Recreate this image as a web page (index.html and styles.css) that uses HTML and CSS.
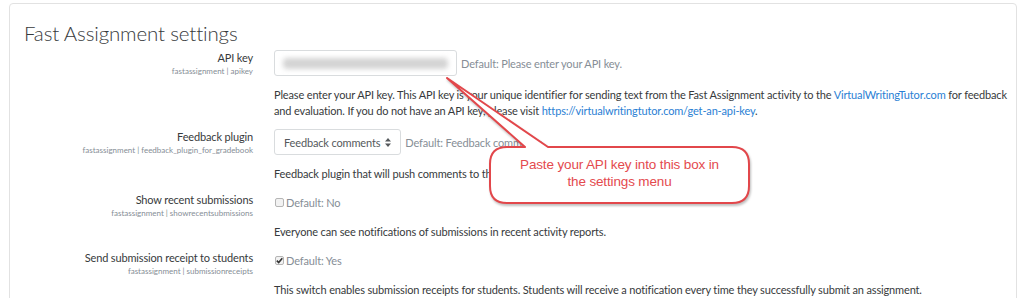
FILE: index.html
```html
<!DOCTYPE html>
<html>
<head>
    <title>Fast Assignment settings</title>
    <link rel="stylesheet" href="styles.css">
</head>
<body>
    <div class="card">
        <h2 class="title">Fast Assignment settings</h2>

        <div class="setting">
            <div class="label">
                <div class="name">API key</div>
                <div class="key">fastassignment | apikey</div>
            </div>
            <div class="field">
                <div class="control">
                    <div class="text-input"><span class="blurred"></span></div>
                    <span class="default">Default: Please enter your API key.</span>
                </div>
                <div class="desc">
                    Please enter your API key. This API key is your unique identifier for sending text from the Fast Assignment activity to the <a href="#">VirtualWritingTutor.com</a> for feedback and evaluation. If you do not have an API key, please visit <a href="#">https://virtualwritingtutor.com/get-an-api-key</a>.
                </div>
            </div>
        </div>

        <div class="setting">
            <div class="label">
                <div class="name">Feedback plugin</div>
                <div class="key">fastassignment | feedback_plugin_for_gradebook</div>
            </div>
            <div class="field">
                <div class="control">
                    <div class="select">
                        Feedback comments
                        <svg class="arrows" width="6" height="9" viewBox="0 0 6 9"><path d="M3 0 L6 3.5 L0 3.5 Z M0 5.5 L6 5.5 L3 9 Z" fill="#55595c"/></svg>
                    </div>
                    <span class="default">Default: Feedback comments</span>
                </div>
                <div class="desc">Feedback plugin that will push comments to the gradebook.</div>
            </div>
        </div>

        <div class="setting">
            <div class="label">
                <div class="name">Show recent submissions</div>
                <div class="key">fastassignment | showrecentsubmissions</div>
            </div>
            <div class="field">
                <div class="control check-line">
                    <span class="checkbox"></span>
                    <span class="default">Default: No</span>
                </div>
                <div class="desc">Everyone can see notifications of submissions in recent activity reports.</div>
            </div>
        </div>

        <div class="setting">
            <div class="label">
                <div class="name">Send submission receipt to students</div>
                <div class="key">fastassignment | submissionreceipts</div>
            </div>
            <div class="field">
                <div class="control check-line">
                    <span class="checkbox">
                        <svg width="9" height="9" viewBox="0 0 9 9"><path d="M1.8 4.6 L3.7 6.6 L7.3 2.2" fill="none" stroke="#333" stroke-width="1.6"/></svg>
                    </span>
                    <span class="default">Default: Yes</span>
                </div>
                <div class="desc">This switch enables submission receipts for students. Students will receive a notification every time they successfully submit an assignment.</div>
            </div>
        </div>
    </div>

    <!-- callout drawn over the page -->
    <div class="callout">
        <svg class="bubble" width="1024" height="298" viewBox="0 0 1024 298">
            <path d="M447 78 L525 147 L507 147 Q490 147 490 164 L490 186 Q490 203 507 203 L732 203 Q749 203 749 186 L749 164 Q749 147 732 147 L548 147 Z"
                  fill="#fff" stroke="#e2474b" stroke-width="2" stroke-linejoin="round"/>
        </svg>
        <div class="callout-text">Paste your API key into this box in<br>the settings menu</div>
    </div>
</body>
</html>
```

FILE: styles.css
```css
body {
    margin: 0;
    padding: 3px 7px 0 9px;
    background: #fff;
    font-family: Lato, "Open Sans", sans-serif;
    font-size: 11px;
    letter-spacing: -0.15px;
    color: #373a3c;
}
.card {
    border: 1px solid #e2e2e2;
    border-radius: 4px;
    padding: 17px 5px 0 14px;
    height: 320px;
}
.title {
    margin: 0 0 4px;
    font-size: 20.5px;
    font-weight: 300;
    line-height: 25px;
    letter-spacing: -0.15px;
    color: #373a3c;
}
.setting {
    display: grid;
    grid-template-columns: 229px 1fr;
    column-gap: 21px;
    margin-bottom: 10px;
}
.label {
    text-align: right;
}
.name {
    line-height: 16px;
}
.key {
    font-size: 8px;
    line-height: 10px;
    letter-spacing: 0;
    color: #868e96;
}
.control {
    display: flex;
    align-items: center;
    height: 26px;
}
.check-line {
    height: 20px;
}
.text-input {
    box-sizing: border-box;
    width: 183px;
    height: 26px;
    border: 1px solid #d9dcde;
    border-radius: 3px;
    padding: 6px;
}
.blurred {
    display: block;
    height: 11px;
    margin: 1px 2px;
    background: #d4d4d4;
    border-radius: 4px;
    filter: blur(2.5px);
}
.select {
    box-sizing: border-box;
    display: flex;
    align-items: center;
    gap: 5px;
    height: 26px;
    padding: 0 9px;
    border: 1px solid #d9dcde;
    border-radius: 3px;
    white-space: nowrap;
    color: #55595c;
}
.default {
    margin-left: 4px;
    color: #868e96;
}
.checkbox {
    box-sizing: border-box;
    display: inline-flex;
    width: 9px;
    height: 9px;
    margin-left: 1px;
    border: 1px solid #b5b5b5;
    border-radius: 2px;
    background: #f2f2f2;
}
.checkbox svg {
    margin: -1px;
}
.check-line .default {
    margin-left: 2px;
}
.desc {
    margin-top: 11px;
    line-height: 16px;
}
.check-line + .desc {
    margin-top: 12px;
}
a {
    color: #2a80d4;
    text-decoration: none;
}
.callout {
    position: absolute;
    top: 0;
    left: 0;
    width: 1024px;
    height: 298px;
    pointer-events: none;
}
.bubble {
    filter: drop-shadow(1px 2px 1px rgba(0,0,0,0.25));
}
.callout-text {
    position: absolute;
    left: 490px;
    top: 156px;
    width: 259px;
    text-align: center;
    font-family: "Liberation Sans", Arial, sans-serif;
    font-size: 13.5px;
    line-height: 17px;
    color: #e44a4e;
}
```
